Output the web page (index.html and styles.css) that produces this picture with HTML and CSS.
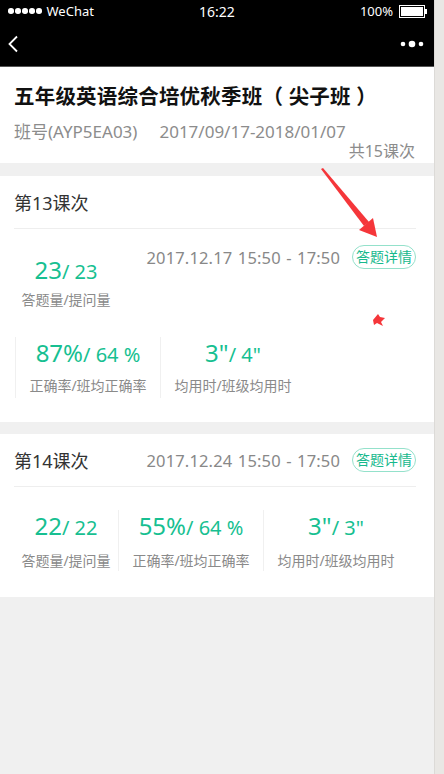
FILE: index.html
```html
<!DOCTYPE html>
<html lang="zh">
<head>
<meta charset="utf-8">
<link rel="stylesheet" href="styles.css">
</head>
<body>
<div class="screen">
  <div class="app">
    <div class="statusbar">
      <div class="sb-left"><span class="signal"><i></i><i></i><i></i><i></i><i></i></span><span class="carrier">WeChat</span></div>
      <div class="sb-time">16:22</div>
      <div class="sb-right"><span>100%</span><span class="battery"><span class="battery-fill"></span></span></div>
    </div>
    <div class="navbar">
      <svg class="back" width="12" height="18" viewBox="0 0 12 18"><path d="M10 1.5 L2.5 9 L10 16.5" fill="none" stroke="#fff" stroke-width="1.8"/></svg>
      <svg class="more" width="24" height="8" viewBox="0 0 24 8"><circle cx="3" cy="4" r="2.3" fill="#fff"/><circle cx="12" cy="4" r="3.3" fill="#fff"/><circle cx="21" cy="4" r="2.3" fill="#fff"/></svg>
    </div>

    <div class="header">
      <h1 class="title">五年级英语综合培优秋季班（ 尖子班 ）</h1>
      <div class="meta"><span>班号(AYP5EA03)</span><span>2017/09/17-2018/01/07</span></div>
      <div class="total">共15课次</div>
    </div>

    <div class="card">
      <div class="card-head"><span class="lesson">第13课次</span></div>
      <div class="card1-top">
        <div class="stat first">
          <div class="num"><span class="big">23</span><span class="small">/ 23</span></div>
          <div class="label">答题量/提问量</div>
        </div>
        <div class="when"><span class="date">2017.12.17 15:50 - 17:50</span><span class="badge">答题详情</span></div>
      </div>
      <div class="stats row2">
        <div class="stat bordered">
          <div class="num"><span class="big">87%</span><span class="small">/ 64 %</span></div>
          <div class="label">正确率/班均正确率</div>
        </div>
        <div class="stat bordered">
          <div class="num"><span class="big">3"</span><span class="small">/ 4"</span></div>
          <div class="label">均用时/班级均用时</div>
        </div>
      </div>
    </div>

    <div class="card card2">
      <div class="card-head"><span class="lesson">第14课次</span><span class="when"><span class="date">2017.12.24 15:50 - 17:50</span><span class="badge">答题详情</span></span></div>
      <div class="stats row3">
        <div class="stat first">
          <div class="num"><span class="big">22</span><span class="small">/ 22</span></div>
          <div class="label">答题量/提问量</div>
        </div>
        <div class="stat bordered">
          <div class="num"><span class="big">55%</span><span class="small">/ 64 %</span></div>
          <div class="label">正确率/班均正确率</div>
        </div>
        <div class="stat bordered">
          <div class="num"><span class="big">3"</span><span class="small">/ 3"</span></div>
          <div class="label">均用时/班级均用时</div>
        </div>
      </div>
    </div>

    <svg class="annot" width="434" height="774" viewBox="0 0 434 774">
      <polygon points="321,169 323,168 369,222 364,226" fill="#f5363a"/>
      <polygon points="377,237 359,230 373,218" fill="#f5363a"/>
      <polygon points="373,320 378,314 380,317 385,318 381,322 383,326 377,323 374,325" fill="#f5363a"/>
    </svg>
  </div>
  <div class="rail"></div>
</div>
</body>
</html>
```

FILE: styles.css
```css
html, body {
  margin: 0;
  padding: 0;
}
body {
  width: 444px;
  height: 774px;
  overflow: hidden;
  font-family: "Noto Sans", "Noto Sans CJK SC", sans-serif;
  background: #f0f0f0;
}
.screen {
  display: flex;
  height: 774px;
}
.app {
  position: relative;
  width: 434px;
  background: #f0f0f0;
}
.rail {
  width: 10px;
  background: #e9e7e4;
  border-left: 1px solid #dcdad7;
  box-sizing: border-box;
}
.statusbar {
  height: 22px;
  background: #000;
  color: #fff;
  display: flex;
  align-items: center;
  justify-content: space-between;
  padding: 0 9px 0 8px;
  font-size: 13px;
  position: relative;
}
.sb-left { display: flex; align-items: center; gap: 5px; }
.signal { display: flex; gap: 1.5px; }
.signal i { width: 5.5px; height: 5.5px; border-radius: 50%; background: #fff; display: block; }
.sb-time { position: absolute; left: 0; right: 0; text-align: center; font-size: 14px; }
.sb-right { display: flex; align-items: center; gap: 6px; position: relative; }
.battery {
  width: 22px; height: 9px; border: 1px solid #fff; box-sizing: content-box;
  position: relative; display: block; padding: 1px;
}
.battery::after {
  content: ""; position: absolute; right: -3px; top: 3px; width: 2px; height: 5px; background: #fff;
}
.battery-fill { display: block; width: 100%; height: 100%; background: #fff; }
.navbar {
  height: 44px;
  background: #000;
  display: flex;
  align-items: center;
  justify-content: space-between;
  padding: 0 10px 0 7px;
  border-bottom: 1px solid #555;
}
.header {
  background: #fff;
  padding: 15px 19px 0 14px;
  height: 96px;
  box-sizing: border-box;
}
.title {
  margin: 0;
  font-size: 20.5px;
  font-weight: bold;
  color: #111;
  line-height: 28px;
  letter-spacing: 0.2px;
}
.meta {
  margin-top: 11px;
  font-size: 17px;
  color: #8c8c8c;
  line-height: 22px;
  display: flex;
  gap: 22px;
}
.total {
  text-align: right;
  font-size: 16px;
  color: #8c8c8c;
  line-height: 20px;
  margin-top: -2px;
}
.card {
  background: #fff;
  margin-top: 13px;
  padding: 0 18px 0 14px;
  height: 246px;
  box-sizing: border-box;
}
.card2 {
  margin-top: 12px;
  height: 163px;
}
.card-head {
  height: 53px;
  border-bottom: 1px solid #eeeeee;
  display: flex;
  align-items: center;
  justify-content: space-between;
  box-sizing: border-box;
}
.lesson {
  font-size: 18px;
  color: #333;
}
.when {
  display: flex;
  align-items: center;
  gap: 12px;
}
.date {
  font-size: 16.5px;
  color: #888;
  letter-spacing: 0.15px;
  word-spacing: 1px;
}
.badge {
  font-size: 14px;
  color: #17b98d;
  border: 1px solid #94e1cb;
  border-radius: 12px;
  height: 24px;
  line-height: 22px;
  padding: 0 3px;
  box-sizing: border-box;
}
.card1-top {
  display: flex;
  justify-content: space-between;
  align-items: flex-start;
  padding-top: 16px;
  height: 108px;
  box-sizing: border-box;
}
.card1-top .stat.first { padding-top: 11px; }
.stat {
  text-align: center;
  display: flex;
  flex-direction: column;
  align-items: center;
}
.stat.first { width: 104px; }
.num {
  color: #17bf91;
  line-height: 28px;
  white-space: nowrap;
}
.big { font-size: 24px; }
.small { font-size: 20px; }
.label {
  font-size: 14px;
  color: #8a8a8a;
  margin-top: 3px;
  line-height: 20px;
  white-space: nowrap;
}
.stats {
  display: flex;
}
.row2 .stat, .row3 .stat.bordered {
  width: 145px;
  border-left: 1px solid #f0f0f0;
  height: 61px;
  box-sizing: border-box;
}
.row2 { padding-left: 1px; }
.row2 .stat { padding-top: 2px; }
.row2 .label { margin-top: 6px; }
.row3 { padding-top: 23px; }
.row3 .stat { height: 61px; padding-top: 2px; box-sizing: border-box; }
.row3 .label { margin-top: 8px; }
.annot {
  position: absolute;
  left: 0;
  top: 0;
  pointer-events: none;
}
```
